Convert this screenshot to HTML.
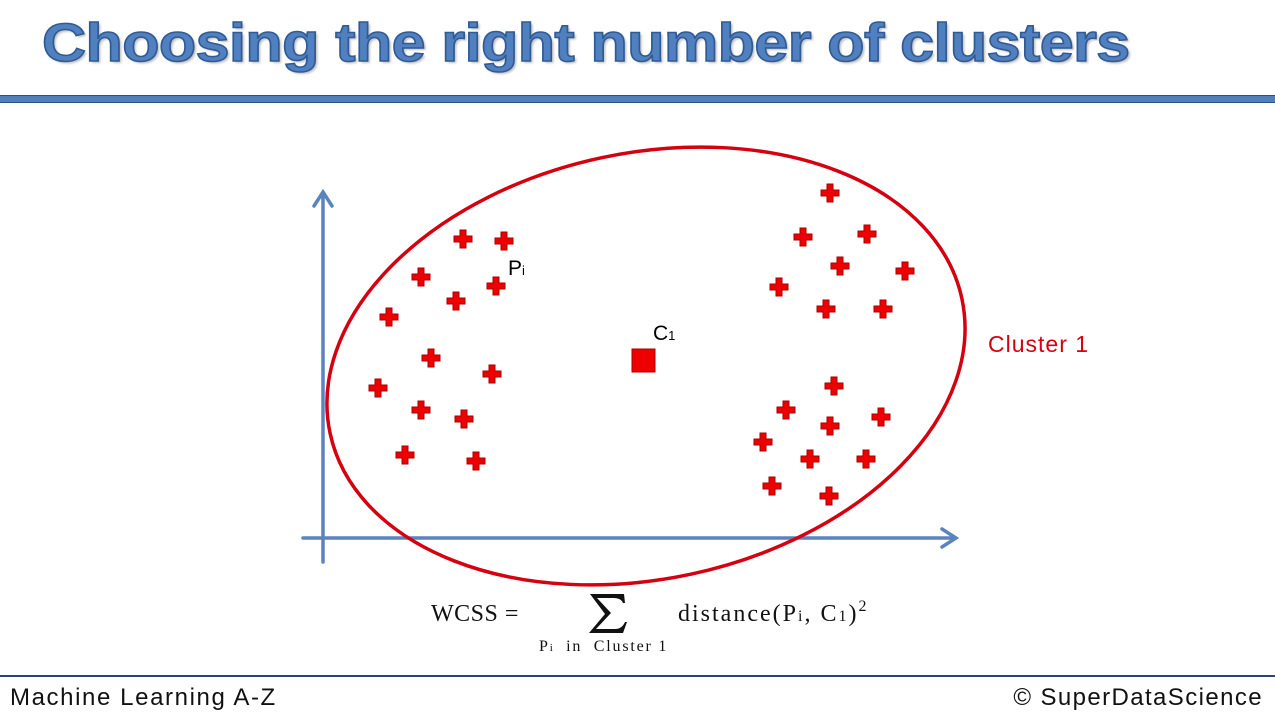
<!DOCTYPE html><html><head><style>
body{margin:0;width:1275px;height:715px;background:#fff;overflow:hidden;position:relative;font-family:"Liberation Sans",sans-serif}
.t{position:absolute;left:42px;top:12px;font-size:54px;font-weight:bold;color:#5080c0;-webkit-text-stroke:1.5px #2f5a94;letter-spacing:-0.5px;text-shadow:2px 2px 2px rgba(0,0,0,.25);transform:scaleX(1.13);transform-origin:0 0;white-space:nowrap}
.f{position:absolute;top:684px;font-size:24px;color:#111}
</style></head><body>
<div class="t">Choosing the right number of clusters</div>
<div style="position:absolute;left:0;top:95px;width:1275px;height:6px;background:#4f7fbf;border-top:1px solid #2a4f80;border-bottom:1px solid #2a4f80"></div>
<div style="position:absolute;left:0;top:675px;width:1275px;height:2px;background:#2a4570"></div>
<div class="f" style="left:10px;letter-spacing:1.6px">Machine Learning A-Z</div>
<div class="f" style="right:12px;letter-spacing:1.4px">© SuperDataScience</div>
<svg width="1275" height="715" style="position:absolute;left:0;top:0">
<defs><g id="c"><path d="M-3,-9h6v6h6v6h-6v6h-6v-6h-6v-6h6z" fill="#e00" stroke="#a00" stroke-width="1"/></g></defs>
<g stroke="#5b84bf" stroke-width="3.5" fill="none" stroke-linecap="round">
<line x1="323" y1="562" x2="323" y2="194"/><path d="M314,206L323,192L332,206"/>
<line x1="303" y1="538" x2="955" y2="538"/><path d="M942,529L956,538L942,547"/></g>
<ellipse cx="646" cy="366" rx="323" ry="213" transform="rotate(-12 646 366)" fill="none" stroke="#d50010" stroke-width="3.5"/>
<g>
<use href="#c" x="463" y="239"/><use href="#c" x="504" y="241"/><use href="#c" x="421" y="277"/><use href="#c" x="496" y="286"/><use href="#c" x="456" y="301"/><use href="#c" x="389" y="317"/><use href="#c" x="431" y="358"/><use href="#c" x="492" y="374"/><use href="#c" x="378" y="388"/><use href="#c" x="421" y="410"/><use href="#c" x="464" y="419"/><use href="#c" x="405" y="455"/><use href="#c" x="476" y="461"/>
<use href="#c" x="830" y="193"/><use href="#c" x="803" y="237"/><use href="#c" x="867" y="234"/><use href="#c" x="840" y="266"/><use href="#c" x="905" y="271"/><use href="#c" x="779" y="287"/><use href="#c" x="826" y="309"/><use href="#c" x="883" y="309"/>
<use href="#c" x="834" y="386"/><use href="#c" x="786" y="410"/><use href="#c" x="881" y="417"/><use href="#c" x="830" y="426"/><use href="#c" x="763" y="442"/><use href="#c" x="810" y="459"/><use href="#c" x="866" y="459"/><use href="#c" x="772" y="486"/><use href="#c" x="829" y="496"/>
</g>
<rect x="632" y="349" width="23" height="23" fill="#e00" stroke="#a00"/>
<text x="508" y="275" font-size="21" font-family="Liberation Sans">P<tspan font-size="13">i</tspan></text>
<text x="653" y="340" font-size="21" font-family="Liberation Sans">C<tspan font-size="13">1</tspan></text>
<text x="988" y="352" font-size="23" fill="#d50010" font-family="Liberation Sans" letter-spacing="1">Cluster 1</text>
<g font-family="Liberation Serif" fill="#111">
<text x="431" y="621" font-size="24" letter-spacing="0.5">WCSS =</text>
<path d="M590,594H624L625,603H623Q621,598 614,598H597L611,613L596,629H615Q622,629 625,622H627L623,633H589L605,614Z" fill="#111"/>
<text x="539" y="651" font-size="16" letter-spacing="1.8" xml:space="preserve">P<tspan font-size="11">i</tspan>  in  Cluster 1</text>
<text x="678" y="621" font-size="24" letter-spacing="2">distance(P<tspan font-size="16">i</tspan>, C<tspan font-size="16">1</tspan>)<tspan font-size="16" dy="-10">2</tspan></text>
</g></svg>
</body></html>
